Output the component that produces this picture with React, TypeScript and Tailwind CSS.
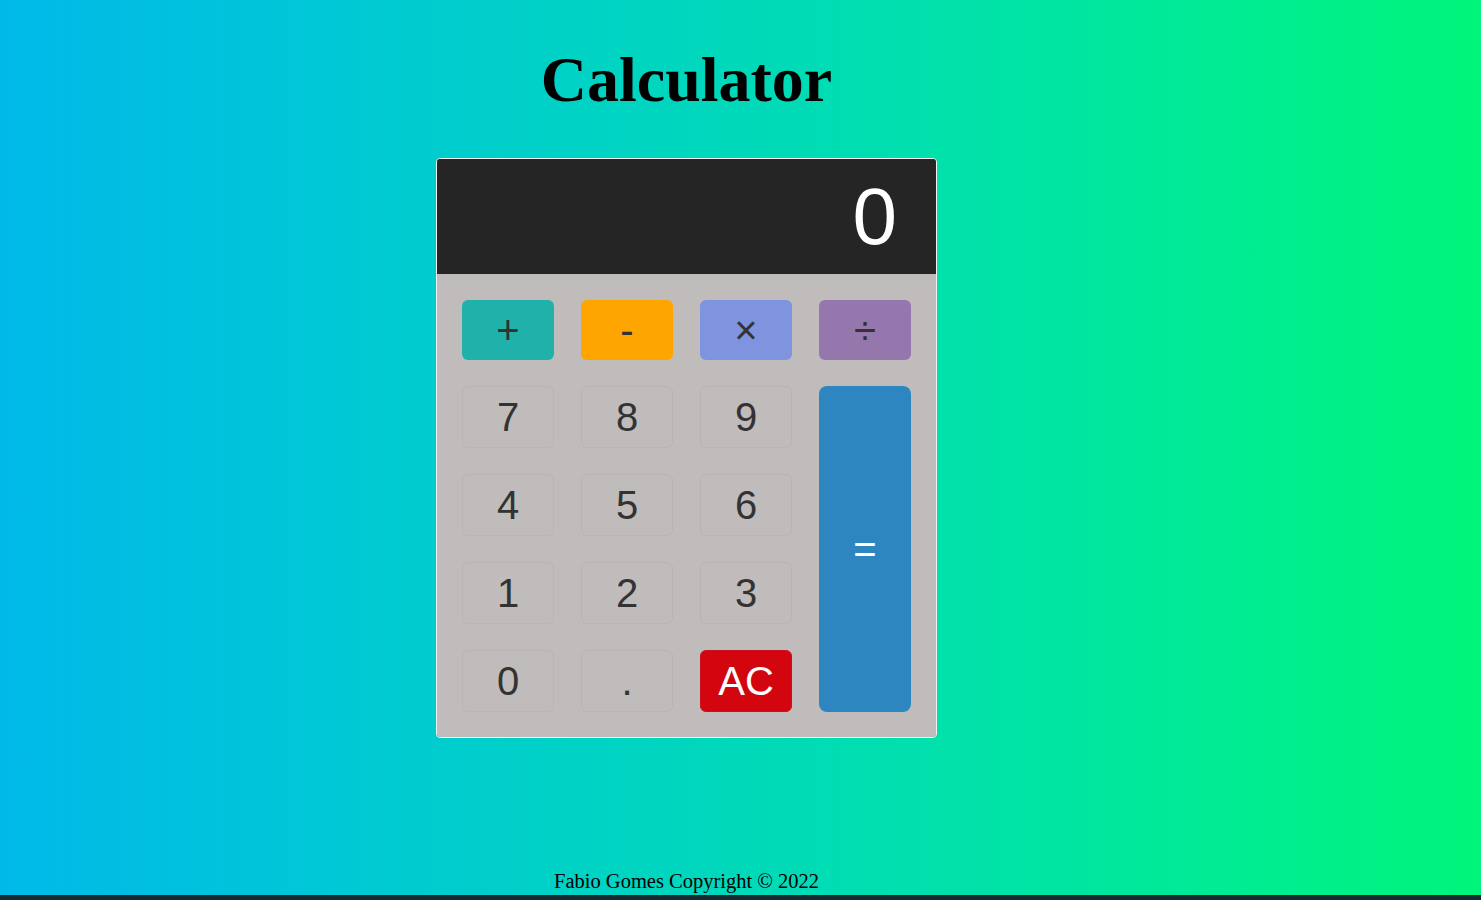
import React from "react";

const numBtn =
  "h-[62px] rounded-[6px] border border-[#b9b5b4] bg-[#c0bcbb] text-[40px] leading-none text-[#333333] flex items-center justify-center";

const opBtn =
  "flex items-center justify-center rounded-[6px] text-[40px] leading-none text-[#333333]";

export default function App() {
  const nums = [
    { label: "7", row: 2, col: 1 },
    { label: "8", row: 2, col: 2 },
    { label: "9", row: 2, col: 3 },
    { label: "4", row: 3, col: 1 },
    { label: "5", row: 3, col: 2 },
    { label: "6", row: 3, col: 3 },
    { label: "1", row: 4, col: 1 },
    { label: "2", row: 4, col: 2 },
    { label: "3", row: 4, col: 3 },
    { label: "0", row: 5, col: 1 },
    { label: ".", row: 5, col: 2 },
  ];
  return (
    <div className="relative h-[900px] w-full overflow-hidden bg-gradient-to-r from-[#00b9e9] to-[#00f57a]">
      <div className="flex h-[895px] w-[1373px] flex-col items-center">
        <h1
          className="mt-[40px] text-[64px] font-bold leading-[80px] text-black"
          style={{ fontFamily: '"Liberation Serif", serif' }}
        >
          Calculator
        </h1>
        <div
          className="mt-[38px] w-[501px] overflow-hidden rounded-[4px] border border-[#f0f0f0]"
          style={{ fontFamily: '"Liberation Sans", Arial, sans-serif' }}
        >
          <div className="flex h-[115px] items-center justify-end bg-[#252525] pr-[39px] text-[80px] leading-none text-white">
            0
          </div>
          <div className="grid grid-cols-[repeat(4,92px)] grid-rows-[60px_repeat(4,62px)] gap-x-[27px] gap-y-[26px] bg-[#c0bcbb] px-[25px] pt-[26px] pb-[25px]">
            <div className={`${opBtn} bg-[#20b2aa]`}>+</div>
            <div className={`${opBtn} bg-[#ffa500]`}>-</div>
            <div className={`${opBtn} bg-[#7f93df]`}>×</div>
            <div className={`${opBtn} bg-[#9576ad]`}>÷</div>
            {nums.map((n) => (
              <div
                key={n.label}
                className={numBtn}
                style={{ gridRow: n.row, gridColumn: n.col }}
              >
                {n.label}
              </div>
            ))}
            <div
              className="flex items-center justify-center rounded-[6px] border border-[#c9121a] bg-[#d3060f] text-[40px] leading-none text-white"
              style={{ gridRow: 5, gridColumn: 3 }}
            >
              AC
            </div>
            <div
              className="flex items-center justify-center rounded-[8px] bg-[#2e86c1] text-[40px] leading-none text-white"
              style={{ gridRow: "2 / 6", gridColumn: 4 }}
            >
              =
            </div>
          </div>
        </div>
        <div className="flex-1" />
        <p
          className="mb-[1px] text-[20.5px] leading-[26px] text-black"
          style={{ fontFamily: '"Liberation Serif", serif' }}
        >
          Fabio Gomes Copyright © 2022
        </p>
      </div>
      <div className="h-[5px] w-full bg-[#132a30]" />
    </div>
  );
}
